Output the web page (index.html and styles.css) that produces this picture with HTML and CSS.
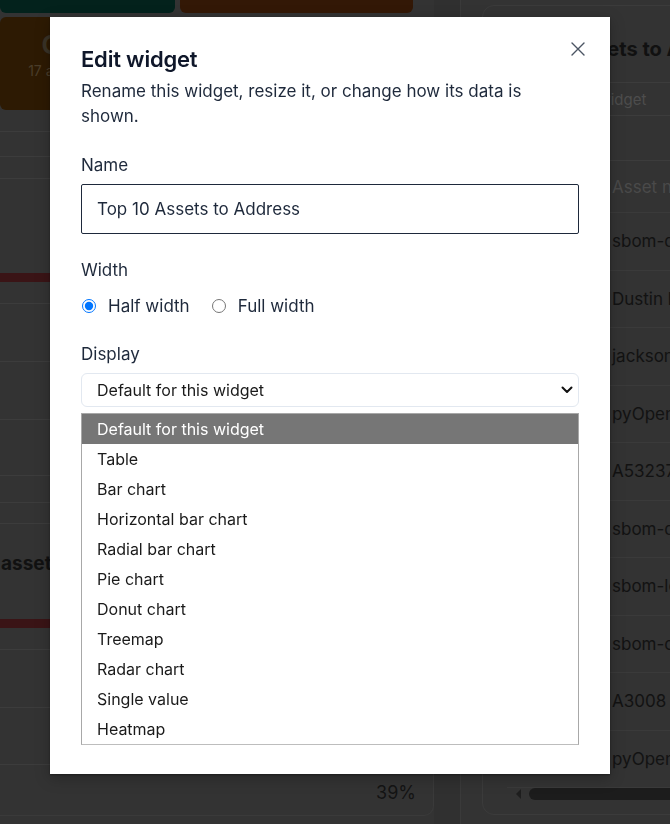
FILE: index.html
```html
<!DOCTYPE html>
<html lang="en">
<head>
<meta charset="utf-8">
<title>Edit widget</title>
<link rel="stylesheet" href="styles.css">
</head>
<body>
<div class="page">
  <div class="left">
    <div class="stats-top">
      <div class="stat green"></div>
      <div class="stat orange"></div>
    </div>
    <div class="stats-second">
      <div class="stat amber">
        <span class="stat-value">Critical</span>
        <span class="stat-sub">17 assets affected</span>
      </div>
    </div>
    <div class="rows">
      <div class="row r21"></div>
      <div class="row r25"></div>
      <div class="row r22"></div>
      <div class="row r95"></div>
      <div class="bar-red"></div>
      <div class="row r21 nb"></div>
      <div class="row r58"></div>
      <div class="row r58"></div>
      <div class="row r56"></div>
      <div class="row r27"></div>
      <div class="row r21"></div>
    </div>
    <div class="card-b">
      <div class="card-b-head">assets by severity</div>
      <div class="bar-red"></div>
      <div class="row r21 nb"></div>
      <div class="row r58"></div>
      <div class="row r57"></div>
      <div class="row last"><span class="pct">39%</span></div>
    </div>
  </div>
  <div class="gutter"></div>
  <div class="right">
    <div class="panel">
      <div class="panel-title">Top 10 Assets to Address</div>
      <div class="panel-sub">Half width table widget</div>
      <div class="table">
        <div class="trow thead"><span class="num">#</span><span>Asset name</span></div>
        <div class="trow"><span class="num">1</span><span>sbom-demo-api</span></div>
        <div class="trow"><span class="num">2</span><span>Dustin laptop</span></div>
        <div class="trow"><span class="num">3</span><span>jackson-core</span></div>
        <div class="trow"><span class="num">4</span><span>pyOpenSSL</span></div>
        <div class="trow"><span class="num">5</span><span>A53237</span></div>
        <div class="trow"><span class="num">6</span><span>sbom-demo-web</span></div>
        <div class="trow"><span class="num">7</span><span>sbom-legacy</span></div>
        <div class="trow"><span class="num">8</span><span>sbom-core</span></div>
        <div class="trow"><span class="num">9</span><span>A3008</span></div>
        <div class="trow"><span class="num">10</span><span>pyOpenSSL</span></div>
        <div class="scrollbar"><span class="arrow"></span><span class="thumb"></span></div>
      </div>
    </div>
  </div>
</div>

<div class="backdrop">
  <div class="modal" role="dialog" aria-labelledby="dlg-title">
    <button class="close" aria-label="Close">
      <svg width="14" height="14" viewBox="0 0 14 14"><path d="M1 1L13 13M13 1L1 13" stroke="#4b5563" stroke-width="1.4" fill="none" stroke-linecap="round"/></svg>
    </button>
    <h2 class="title" id="dlg-title">Edit widget</h2>
    <p class="desc">Rename this widget, resize it, or change how its data is shown.</p>

    <div class="field">
      <label class="label" for="name">Name</label>
      <input class="input" id="name" type="text" value="Top 10 Assets to Address">
    </div>

    <div class="field">
      <div class="label">Width</div>
      <div class="radios">
        <label class="radio"><input type="radio" name="w" checked> Half width</label>
        <label class="radio"><input type="radio" name="w"> Full width</label>
      </div>
    </div>

    <div class="field">
      <div class="label">Display</div>
      <div class="select">
        <span>Default for this widget</span>
        <svg width="12" height="8" viewBox="0 0 12 8"><path d="M1.5 1.5L6 6L10.5 1.5" stroke="#111" stroke-width="2" fill="none" stroke-linecap="round" stroke-linejoin="round"/></svg>
      </div>
      <ul class="options" role="listbox">
        <li class="selected">Default for this widget</li>
        <li>Table</li>
        <li>Bar chart</li>
        <li>Horizontal bar chart</li>
        <li>Radial bar chart</li>
        <li>Pie chart</li>
        <li>Donut chart</li>
        <li>Treemap</li>
        <li>Radar chart</li>
        <li>Single value</li>
        <li>Heatmap</li>
      </ul>
    </div>
  </div>
</div>
</body>
</html>
```
FILE: styles.css
```css
* { box-sizing: border-box; }
html, body {
  margin: 0;
  padding: 0;
}
body {
  width: 670px;
  height: 824px;
  overflow: hidden;
  background: #333333;
  font-family: Inter, "Noto Sans", "Liberation Sans", sans-serif;
}

/* ---------- dimmed page behind the dialog ---------- */
.page {
  display: flex;
  height: 824px;
}
.left {
  width: 434px;
  flex: none;
  display: flex;
  flex-direction: column;
}
.stats-top {
  display: flex;
  gap: 5px;
  height: 13px;
}
.stat { border-radius: 0 0 6px 6px; }
.green { width: 175px; background: #03221c; }
.orange { width: 233px; background: #331806; }
.stats-second {
  display: flex;
  margin-top: 4px;
  height: 93px;
}
.amber {
  width: 175px;
  background: #2d1a03;
  border-radius: 6px;
  display: flex;
  flex-direction: column;
  align-items: center;
  justify-content: center;
  gap: 2px;
  padding-bottom: 18px;
}
.stat-value { font-size: 25px; font-weight: 700; color: #3a3327; padding-right: 4px; }
.stat-sub { font-size: 14px; color: #4a3d2a; }

.rows { display: flex; flex-direction: column; }
.row { border-top: 1px solid #3c3c3c; }
.row.nb { border-top: none; }
.r21 { height: 21px; }
.r22 { height: 22px; }
.r25 { height: 25px; }
.r27 { height: 27px; }
.r56 { height: 56px; }
.r57 { height: 57px; }
.r58 { height: 58px; }
.r95 { height: 95px; }
.rows .row:first-child { border-top: none; }
.bar-red { height: 9px; background: #3a1416; }

.card-b {
  display: flex;
  flex-direction: column;
  border-right: 1px solid #3a3a3a;
  border-bottom: 1px solid #3a3a3a;
  border-radius: 0 0 10px 0;
  border-top: 1px solid #3c3c3c;
}
.card-b-head {
  height: 95px;
  display: flex;
  align-items: center;
  padding: 0 0 17px 1px;
  font-size: 19px;
  font-weight: 700;
  color: #111;
}
.row.last {
  height: 51px;
  display: flex;
  align-items: center;
  justify-content: flex-end;
  padding: 4px 17px 0 0;
}
.pct { font-size: 18px; color: #141414; }

.gutter {
  width: 27px;
  flex: none;
  background: #303030;
  border-right: 1px solid #3a3a3a;
}
.right {
  flex: 1;
  padding: 5px 0 0 21px;
  overflow: hidden;
}
.panel {
  width: 260px;
  height: 810px;
  border: 1px solid #3b3b3b;
  border-radius: 12px;
  display: flex;
  flex-direction: column;
}
.panel-title {
  height: 77px;
  display: flex;
  align-items: center;
  padding: 10px 0 0 19px;
  font-size: 20px;
  font-weight: 700;
  color: #111;
  white-space: nowrap;
  border-bottom: 1px solid #3c3c3c;
}
.panel-sub {
  height: 33px;
  display: flex;
  align-items: center;
  padding-left: 0;
  font-size: 15px;
  color: #4d4d4d;
  white-space: nowrap;
  border-bottom: 1px solid #3c3c3c;
}
.table {
  margin: 44px 0 0 24px;
  border-top: 1px solid #3c3c3c;
  display: flex;
  flex-direction: column;
}
.trow {
  height: 57.5px;
  display: flex;
  align-items: center;
  font-size: 17px;
  color: #121212;
  white-space: nowrap;
  border-bottom: 1px solid #3a3a3a;
}
.trow.thead { height: 52px; color: #4a4a4a; }
.num { width: 105px; flex: none; padding-left: 12px; }
.scrollbar {
  display: flex;
  align-items: center;
  gap: 8px;
  height: 12px;
  margin-top: 0;
  padding-left: 9px;
}
.arrow {
  width: 0; height: 0;
  border-top: 5px solid transparent;
  border-bottom: 5px solid transparent;
  border-right: 5px solid #1e1e1e;
}
.thumb {
  flex: 1;
  height: 12px;
  border-radius: 6px;
  background: #1c1c1c;
}

/* ---------- dialog ---------- */
.backdrop {
  position: fixed;
  inset: 0;
  padding: 17px 0 0 50px;
}
.modal {
  position: relative;
  width: 560px;
  height: 757px;
  background: #ffffff;
  padding: 28px 31px 29px;
  box-shadow: 0 1px 2px rgba(0,0,0,0.35), 0 4px 14px rgba(0,0,0,0.25);
}
.close {
  position: absolute;
  top: 24px;
  right: 24px;
  width: 16px;
  height: 16px;
  padding: 1px;
  border: none;
  background: none;
  cursor: pointer;
}
.close svg { display: block; }
.title {
  margin: 0;
  font-size: 22px;
  line-height: 28px;
  font-weight: 600;
  color: #0f172a;
  letter-spacing: -0.2px;
}
.desc {
  margin: 6px 0 0;
  max-width: 460px;
  font-size: 17px;
  line-height: 25px;
  color: #1e293b;
}
.field { margin-top: 24px; }
.field:last-child { margin-top: 24px; }
.label {
  display: block;
  font-size: 17px;
  line-height: 24px;
  color: #1e293b;
  margin-bottom: 7px;
}
.input {
  display: block;
  width: 100%;
  height: 50px;
  margin: 0;
  padding: 0 15px;
  border: 1px solid #1e293b;
  border-radius: 2px;
  font: inherit;
  font-size: 17px;
  color: #1e293b;
  background: #fff;
  outline: none;
}
.radios {
  display: flex;
  align-items: center;
  gap: 21px;
  height: 24px;
  margin-top: 12px;
}
.radio {
  display: inline-flex;
  align-items: center;
  gap: 12px;
  font-size: 17px;
  line-height: 24px;
  color: #1e293b;
}
.radio input {
  margin: 0 0 0 1px;
  width: 14px;
  height: 14px;
}
.select {
  display: flex;
  align-items: center;
  justify-content: space-between;
  height: 34px;
  padding: 0 5px 0 15px;
  border: 1px solid #e2e8f0;
  border-radius: 6px;
  font-size: 16px;
  color: #1a1a1a;
  background: #fff;
}
.options {
  list-style: none;
  margin: 6px 0 0;
  padding: 0;
  border: 1px solid #a8a8a8;
  border-bottom-color: #bdbdbd;
  background: #fff;
}
.options li {
  height: 30px;
  line-height: 30px;
  padding-left: 15px;
  font-size: 16px;
  color: #1a1a1a;
}
.options li.selected {
  background: #767676;
  color: #ffffff;
}
```
